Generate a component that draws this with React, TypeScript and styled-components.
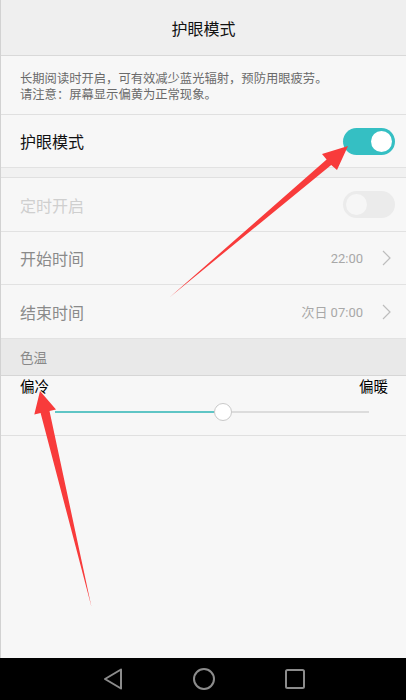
import styled, { createGlobalStyle } from "styled-components";

const GlobalStyle = createGlobalStyle`
  html, body {
    margin: 0;
    padding: 0;
    background: #f7f7f7;
  }
  * {
    box-sizing: border-box;
  }
`;

const Screen = styled.div`
  position: relative;
  width: 406px;
  height: 700px;
  display: flex;
  flex-direction: column;
  font-family: Roboto, "Noto Sans CJK SC", sans-serif;
  overflow: hidden;
`;

const Content = styled.div`
  flex: 1;
  display: flex;
  flex-direction: column;
  background: #f7f7f7;
  border-left: 1px solid #d2d2d2;
`;

const Header = styled.div`
  height: 56px;
  display: flex;
  align-items: center;
  justify-content: center;
  background: #efefef;
  border-bottom: 1px solid #d9d9d9;
  font-size: 16px;
  color: #111;
`;

const Description = styled.div`
  height: 59px;
  padding: 16px 19px 0;
  font-size: 12.3px;
  line-height: 15.5px;
  color: #6a6a6a;
  border-bottom: 1px solid #e0e0e0;
`;

const Row = styled.div<{ $h: number }>`
  height: ${(p) => p.$h}px;
  display: flex;
  align-items: center;
  padding: 0 11px 0 19px;
  border-bottom: 1px solid #e2e2e2;
`;

const Label = styled.span<{ $tone: "dark" | "muted" | "disabled" }>`
  flex: 1;
  font-size: 16px;
  color: ${(p) =>
    p.$tone === "dark" ? "#111" : p.$tone === "muted" ? "#8a8a8a" : "#cfcfcf"};
`;

const Value = styled.span`
  font-size: 13px;
  color: #a8a8a8;
  margin-right: 19px;
`;

const Chevron = styled.svg`
  width: 9px;
  height: 16px;
  margin-right: 4px;
`;

const Gap = styled.div`
  height: 10px;
  background: #f1f1f1;
  border-bottom: 1px solid #e0e0e0;
`;

const Switch = styled.div<{ $on: boolean }>`
  width: 52px;
  height: 27px;
  border-radius: 14px;
  padding: 3px;
  display: flex;
  justify-content: ${(p) => (p.$on ? "flex-end" : "flex-start")};
  background: ${(p) => (p.$on ? "#35bfc3" : "#ebebeb")};
`;

const Knob = styled.div<{ $on: boolean }>`
  width: 21px;
  height: 21px;
  border-radius: 50%;
  background: ${(p) => (p.$on ? "#ffffff" : "#f6f6f6")};
`;

const SectionTitle = styled.div`
  height: 37px;
  display: flex;
  align-items: center;
  padding: 0 19px;
  background: #e9e9e9;
  border-bottom: 1px solid #d6d6d6;
  font-size: 13.5px;
  color: #888;
`;

const SliderBlock = styled.div`
  height: 60px;
  display: flex;
  flex-direction: column;
  border-bottom: 1px solid #e0e0e0;
`;

const SliderLabels = styled.div`
  display: flex;
  justify-content: space-between;
  padding: 3px 18px 0 19px;
  font-size: 14.5px;
  line-height: 18px;
  color: #000;
`;

const Track = styled.div`
  position: relative;
  height: 2px;
  margin: 14px 37px 0 54px;
  background: #dcdcdc;
`;

const Fill = styled.div`
  height: 2px;
  background: #5fc5c5;
`;

const Thumb = styled.div`
  position: absolute;
  top: -8px;
  width: 18px;
  height: 18px;
  margin-left: -9px;
  border-radius: 50%;
  background: #fff;
  border: 1px solid #c9c9c9;
`;

const NavBar = styled.div`
  height: 42px;
  background: #000;
  display: flex;
  align-items: center;
  justify-content: center;
  gap: 67px;
  padding-left: 2px;
`;

const NavIcon = styled.svg`
  width: 24px;
  height: 24px;
`;

const Overlay = styled.svg`
  position: absolute;
  left: 0;
  top: 0;
  pointer-events: none;
`;

const rows = [
  { label: "开始时间", value: "22:00", h: 53 },
  { label: "结束时间", value: "次日 07:00", h: 54 },
];

export default function App() {
  const temperature = 0.535;

  return (
    <Screen>
      <GlobalStyle />
      <Content>
        <Header>护眼模式</Header>
        <Description>
          长期阅读时开启，可有效减少蓝光辐射，预防用眼疲劳。
          <br />
          请注意：屏幕显示偏黄为正常现象。
        </Description>
        <Row $h={53}>
          <Label $tone="dark">护眼模式</Label>
          <Switch $on>
            <Knob $on />
          </Switch>
        </Row>
        <Gap />
        <Row $h={54}>
          <Label $tone="disabled">定时开启</Label>
          <Switch $on={false}>
            <Knob $on={false} />
          </Switch>
        </Row>
        {rows.map((item) => (
          <Row $h={item.h} key={item.label}>
            <Label $tone="muted">{item.label}</Label>
            <Value>{item.value}</Value>
            <Chevron viewBox="0 0 9 16">
              <polyline
                points="1,1 8,8 1,15"
                fill="none"
                stroke="#bdbdbd"
                strokeWidth="1.2"
              />
            </Chevron>
          </Row>
        ))}
        <SectionTitle>色温</SectionTitle>
        <SliderBlock>
          <SliderLabels>
            <span>偏冷</span>
            <span>偏暖</span>
          </SliderLabels>
          <Track>
            <Fill style={{ width: `${temperature * 100}%` }} />
            <Thumb style={{ left: `${temperature * 100}%` }} />
          </Track>
        </SliderBlock>
      </Content>
      <NavBar>
        <NavIcon viewBox="0 0 24 24">
          <path
            d="M20 2.5 L4 12 L20 21.5 Z"
            fill="none"
            stroke="#8c8c8c"
            strokeWidth="2"
            strokeLinejoin="round"
          />
        </NavIcon>
        <NavIcon viewBox="0 0 24 24">
          <circle cx="12" cy="12" r="10" fill="none" stroke="#8c8c8c" strokeWidth="2" />
        </NavIcon>
        <NavIcon viewBox="0 0 24 24">
          <rect
            x="3"
            y="3"
            width="18"
            height="18"
            rx="1.5"
            fill="none"
            stroke="#8c8c8c"
            strokeWidth="2"
          />
        </NavIcon>
      </NavBar>
      <Overlay width="406" height="700" viewBox="0 0 406 700">
        <polygon
          points="348,146 322,154 326.6,159.5 170,297 331.2,164.9 337,170"
          fill="#f83b3b"
        />
        <polygon
          points="40,391 34.3,414.5 40.6,413 91.5,607 49.5,411 56,409.5"
          fill="#f83b3b"
        />
      </Overlay>
    </Screen>
  );
}
